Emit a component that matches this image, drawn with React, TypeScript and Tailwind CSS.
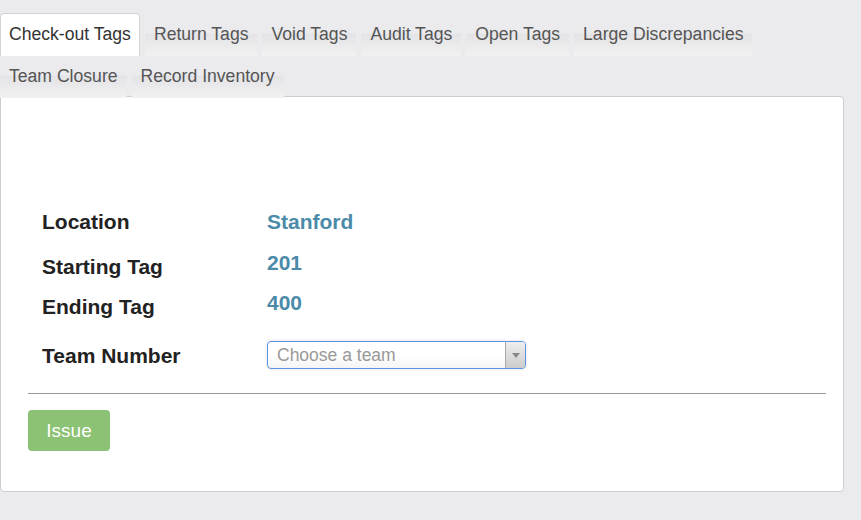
import React from "react";

const tabs1 = ["Check-out Tags", "Return Tags", "Void Tags", "Audit Tags", "Open Tags", "Large Discrepancies"];
const tabs2 = ["Team Closure", "Record Inventory"];

function Tab({ label, active }: { label: string; active?: boolean }) {
  if (active) {
    return (
      <div className="mr-[5px] h-[43px] px-[8px] leading-[41px] text-[17.6px] text-[#333] bg-white border border-b-0 border-[#d4d4d6] rounded-t-[4px] relative z-10">
        {label}
      </div>
    );
  }
  return (
    <div className="mr-[5px] h-[43px] px-[9px] leading-[43px] text-[17.6px] text-[#555] bg-[linear-gradient(to_bottom,transparent_46%,#e4e4e6_50%,#f1f1f2_100%)]">
      {label}
    </div>
  );
}

export default function App() {
  return (
    <div
      className="w-[861px] h-[520px] bg-[#ebebed] overflow-hidden"
      style={{ fontFamily: '"Liberation Sans", Arial, sans-serif' }}
    >
      <div className="pt-[13px]">
        <div className="flex">
          {tabs1.map((t, i) => (
            <Tab key={t} label={t} active={i === 0} />
          ))}
        </div>
        <div className="flex h-[41px] -mt-[1px]">
          {tabs2.map((t) => (
            <Tab key={t} label={t} />
          ))}
        </div>
      </div>
      <div className="w-[844px] bg-white border border-[#c9ccd1] rounded-r-[4px] rounded-bl-[4px] pb-[40px]">
        <div className="pl-[41px] pt-[114px] text-[21px] font-bold">
          <div className="flex h-[22px] leading-[22px]">
            <div className="w-[225px] text-[#222]">Location</div>
            <div className="text-[#4b8ba9]">Stanford</div>
          </div>
          <div className="flex mt-[19px] leading-[22px]">
            <div className="w-[225px] pt-[4px] text-[#222]">Starting Tag</div>
            <div className="text-[#4b8ba9]">201</div>
          </div>
          <div className="flex mt-[14px] leading-[22px]">
            <div className="w-[225px] pt-[4px] text-[#222]">Ending Tag</div>
            <div className="text-[#4b8ba9]">400</div>
          </div>
          <div className="flex mt-[23px] leading-[22px]">
            <div className="w-[225px] pt-[4px] text-[#222]">Team Number</div>
            <div className="w-[259px] h-[28px] border border-[#5897e6] rounded-[4px] bg-[linear-gradient(to_bottom,#ffffff_50%,#f4f4f4_100%)] shadow-[0_0_3px_rgba(0,0,0,0.15)] flex items-stretch font-normal overflow-hidden">
              <div className="flex-1 pl-[9px] text-[17.5px] leading-[26px] text-[#999]">Choose a team</div>
              <div className="w-[20px] border-l border-[#aaa] bg-[linear-gradient(to_bottom,#eeeeee,#cccccc)] flex items-center justify-center">
                <svg width="8" height="5" viewBox="0 0 8 5">
                  <path d="M0 0 L8 0 L4 5 Z" fill="#888" />
                </svg>
              </div>
            </div>
          </div>
        </div>
        <div className="ml-[27px] mr-[17px] mt-[24px] border-t border-[#999]" />
        <button className="ml-[27px] mt-[16px] w-[82px] h-[41px] rounded-[4px] bg-[#8bc273] text-white text-[19px] leading-[41px] text-center">
          Issue
        </button>
      </div>
    </div>
  );
}
